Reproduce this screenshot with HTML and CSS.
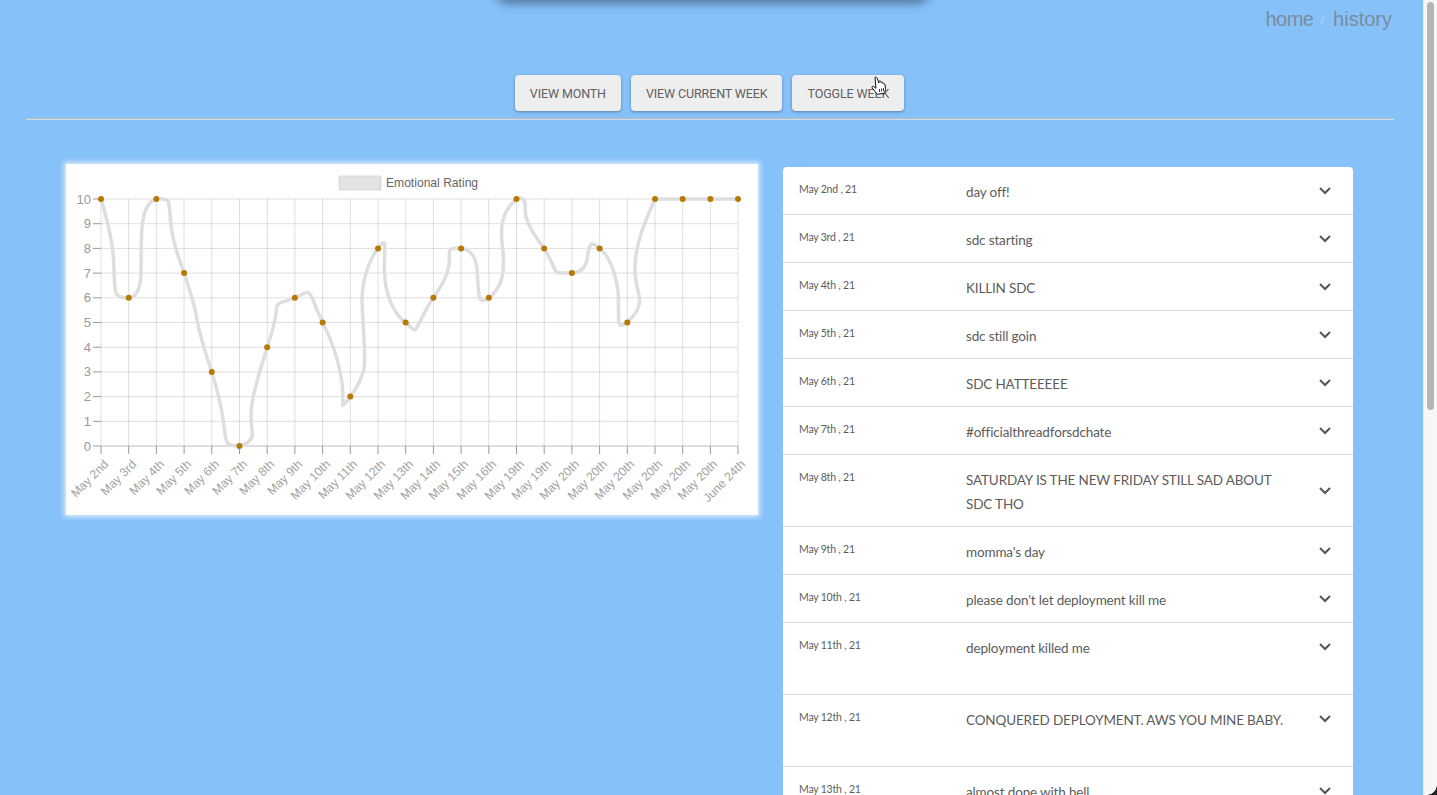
FILE: index.html
```html
<!DOCTYPE HTML>
<html>
<head>
    <title>history</title>
    <link rel="stylesheet" href="styles.css">
</head>

<body>
    <div class="window">
        <div class="page">
            <div class="top-drawer"></div>

            <nav class="crumbs">
                <span class="crumb crumb-home">home</span>
                <span class="crumb-sep">/</span>
                <span class="crumb">history</span>
            </nav>

            <div class="toolbar">
                <button class="btn">VIEW MONTH</button>
                <button class="btn">VIEW CURRENT WEEK</button>
                <button class="btn">TOGGLE WEEK</button>
            </div>
            <div class="rule"></div>

            <div class="columns">
                <div class="chart-card">
                    <svg class="chart" width="692" height="351" viewBox="66 164 692 351">
                        <rect class="legend-box" x="339.5" y="176.5" width="41" height="13"></rect>
                        <text class="legend-text" x="386" y="187">Emotional Rating</text>

                        <!-- grid -->
                        <path class="grid" d="M101 199V446M128.7 199V446M156.4 199V446M184.1 199V446M211.8 199V446M239.5 199V446M267.2 199V446M294.9 199V446M322.6 199V446M350.3 199V446M378 199V446M405.7 199V446M433.4 199V446M461.1 199V446M488.8 199V446M516.5 199V446M544.2 199V446M571.9 199V446M599.6 199V446M627.3 199V446M655 199V446M682.7 199V446M710.4 199V446M738 199V446"></path>
                        <path class="grid" d="M101 199H738M101 223.7H738M101 248.4H738M101 273.1H738M101 297.8H738M101 322.5H738M101 347.2H738M101 371.9H738M101 396.6H738M101 421.3H738"></path>
                        <path class="zero" d="M101 446H738"></path>
                        <path class="ticks" d="M93 199H101M93 223.7H101M93 248.4H101M93 273.1H101M93 297.8H101M93 322.5H101M93 347.2H101M93 371.9H101M93 396.6H101M93 421.3H101M93 446H101M101 446V454M128.7 446V454M156.4 446V454M184.1 446V454M211.8 446V454M239.5 446V454M267.2 446V454M294.9 446V454M322.6 446V454M350.3 446V454M378 446V454M405.7 446V454M433.4 446V454M461.1 446V454M488.8 446V454M516.5 446V454M544.2 446V454M571.9 446V454M599.6 446V454M627.3 446V454M655 446V454M682.7 446V454M710.4 446V454M738 446V454"></path>

                        <!-- y labels -->
                        <text class="y-label" x="91" y="203.5">10</text>
                        <text class="y-label" x="91" y="228">9</text>
                        <text class="y-label" x="91" y="253">8</text>
                        <text class="y-label" x="91" y="277.5">7</text>
                        <text class="y-label" x="91" y="302">6</text>
                        <text class="y-label" x="91" y="327">5</text>
                        <text class="y-label" x="91" y="351.5">4</text>
                        <text class="y-label" x="91" y="376">3</text>
                        <text class="y-label" x="91" y="401">2</text>
                        <text class="y-label" x="91" y="425.5">1</text>
                        <text class="y-label" x="91" y="450.5">0</text>

                        <!-- x labels -->
                        <text class="x-label" transform="translate(109 465) rotate(-45)">May 2nd</text>
                        <text class="x-label" transform="translate(137 465) rotate(-45)">May 3rd</text>
                        <text class="x-label" transform="translate(165 465) rotate(-45)">May 4th</text>
                        <text class="x-label" transform="translate(192 465) rotate(-45)">May 5th</text>
                        <text class="x-label" transform="translate(220 465) rotate(-45)">May 6th</text>
                        <text class="x-label" transform="translate(248 465) rotate(-45)">May 7th</text>
                        <text class="x-label" transform="translate(275 465) rotate(-45)">May 8th</text>
                        <text class="x-label" transform="translate(303 465) rotate(-45)">May 9th</text>
                        <text class="x-label" transform="translate(331 465) rotate(-45)">May 10th</text>
                        <text class="x-label" transform="translate(358 465) rotate(-45)">May 11th</text>
                        <text class="x-label" transform="translate(386 465) rotate(-45)">May 12th</text>
                        <text class="x-label" transform="translate(414 465) rotate(-45)">May 13th</text>
                        <text class="x-label" transform="translate(441 465) rotate(-45)">May 14th</text>
                        <text class="x-label" transform="translate(469 465) rotate(-45)">May 15th</text>
                        <text class="x-label" transform="translate(497 465) rotate(-45)">May 16th</text>
                        <text class="x-label" transform="translate(525 465) rotate(-45)">May 19th</text>
                        <text class="x-label" transform="translate(552 465) rotate(-45)">May 19th</text>
                        <text class="x-label" transform="translate(580 465) rotate(-45)">May 20th</text>
                        <text class="x-label" transform="translate(608 465) rotate(-45)">May 20th</text>
                        <text class="x-label" transform="translate(635 465) rotate(-45)">May 20th</text>
                        <text class="x-label" transform="translate(663 465) rotate(-45)">May 20th</text>
                        <text class="x-label" transform="translate(691 465) rotate(-45)">May 20th</text>
                        <text class="x-label" transform="translate(718 465) rotate(-45)">May 20th</text>
                        <text class="x-label" transform="translate(746 465) rotate(-45)">June 24th</text>

                        <!-- rating line -->
                        <path class="line" d="M101 199C106 216 112 235 113.5 258C114.5 275 114 288 116 293C118 297.5 124 298 128.7 298C134 298 139 292 140.5 280C142 265 140 235 143 220C145 208 150 201 156.4 199C161 198.5 166 199 168 201C170 204 170 222 172 232C174 245 180 262 184.1 273C189 288 195 305 197 320C200 335 207 358 211.8 372C216 385 221 405 223.5 422C225 432 225 441 228 443.5C231 445.5 236 446 239.5 446C243 445 250 442 252 437C253 431 250 420 251.5 408C253 390 262 365 267.2 347C272 333 276 320 276.5 308C276.5 305 278 304 280 303C285 301 290 300 294.9 298C299 296 305 292 308 292.5C311 293 313 300 315 305C317 311 320 316 322.6 322.5C328 333 338 355 342 382C343 390 343 402 343 405C345 404 347 401 350.3 396.6C356 389 362 380 364 368C366 355 363 330 362 300C362 280 370 258 378 248.4C380 246 383 241 384.5 243C386 247 383 265 385 280C387 298 395 315 405.7 322.5C409 325 413 331 415.5 329.5C418 327 425 309 433.4 298C440 288 447 278 449 265C450 258 448 250 451 249C454 248 457 248 461.1 248.4C470 249 475 255 477 268C478 280 478 295 480 299C482 301 485 301 488.8 298C497 291 503 283 503.5 265C504 250 500 240 502 225C504 213 510 204 516.5 199C519 198 523 198 524 200C526 203 524 212 527 220C530 229 537 239 544.2 248.4C548 255 553 265 555 270C556 273 558 273 560 273C564 273 568 273 571.9 273C580 273 585 268 587 260C588 252 589 245 592 244C594 244 597 246 599.6 248.4C610 256 616 275 618 292C619 302 618 318 619 323C620 327 623 325 627.3 322.5C633 316 639 311 639.5 302C640 292 634 283 635 265C636 240 648 215 655 199L738 199"></path>

                        <!-- points -->
                        <circle class="dot" cx="101" cy="199" r="3"></circle>
                        <circle class="dot" cx="128.7" cy="297.8" r="3"></circle>
                        <circle class="dot" cx="156.4" cy="199" r="3"></circle>
                        <circle class="dot" cx="184.1" cy="273.1" r="3"></circle>
                        <circle class="dot" cx="211.8" cy="371.9" r="3"></circle>
                        <circle class="dot" cx="239.5" cy="446" r="3"></circle>
                        <circle class="dot" cx="267.2" cy="347.2" r="3"></circle>
                        <circle class="dot" cx="294.9" cy="297.8" r="3"></circle>
                        <circle class="dot" cx="322.6" cy="322.5" r="3"></circle>
                        <circle class="dot" cx="350.3" cy="396.6" r="3"></circle>
                        <circle class="dot" cx="378" cy="248.4" r="3"></circle>
                        <circle class="dot" cx="405.7" cy="322.5" r="3"></circle>
                        <circle class="dot" cx="433.4" cy="297.8" r="3"></circle>
                        <circle class="dot" cx="461.1" cy="248.4" r="3"></circle>
                        <circle class="dot" cx="488.8" cy="297.8" r="3"></circle>
                        <circle class="dot" cx="516.5" cy="199" r="3"></circle>
                        <circle class="dot" cx="544.2" cy="248.4" r="3"></circle>
                        <circle class="dot" cx="571.9" cy="273.1" r="3"></circle>
                        <circle class="dot" cx="599.6" cy="248.4" r="3"></circle>
                        <circle class="dot" cx="627.3" cy="322.5" r="3"></circle>
                        <circle class="dot" cx="655" cy="199" r="3"></circle>
                        <circle class="dot" cx="682.7" cy="199" r="3"></circle>
                        <circle class="dot" cx="710.4" cy="199" r="3"></circle>
                        <circle class="dot" cx="738" cy="199" r="3"></circle>
                    </svg>
                </div>

                <div class="entries">
                    <div class="entry">
                        <div class="entry-date">May 2nd , 21</div>
                        <div class="entry-title">day off!</div>
                        <svg class="chevron" width="12" height="8" viewBox="0 0 12 8"><path d="M1 1l5 5 5-5"></path></svg>
                    </div>
                    <div class="entry">
                        <div class="entry-date">May 3rd , 21</div>
                        <div class="entry-title">sdc starting</div>
                        <svg class="chevron" width="12" height="8" viewBox="0 0 12 8"><path d="M1 1l5 5 5-5"></path></svg>
                    </div>
                    <div class="entry">
                        <div class="entry-date">May 4th , 21</div>
                        <div class="entry-title">KILLIN SDC</div>
                        <svg class="chevron" width="12" height="8" viewBox="0 0 12 8"><path d="M1 1l5 5 5-5"></path></svg>
                    </div>
                    <div class="entry">
                        <div class="entry-date">May 5th , 21</div>
                        <div class="entry-title">sdc still goin</div>
                        <svg class="chevron" width="12" height="8" viewBox="0 0 12 8"><path d="M1 1l5 5 5-5"></path></svg>
                    </div>
                    <div class="entry">
                        <div class="entry-date">May 6th , 21</div>
                        <div class="entry-title">SDC HATTEEEEE</div>
                        <svg class="chevron" width="12" height="8" viewBox="0 0 12 8"><path d="M1 1l5 5 5-5"></path></svg>
                    </div>
                    <div class="entry">
                        <div class="entry-date">May 7th , 21</div>
                        <div class="entry-title">#officialthreadforsdchate</div>
                        <svg class="chevron" width="12" height="8" viewBox="0 0 12 8"><path d="M1 1l5 5 5-5"></path></svg>
                    </div>
                    <div class="entry entry-wrap">
                        <div class="entry-date">May 8th , 21</div>
                        <div class="entry-title">SATURDAY IS THE NEW FRIDAY STILL SAD ABOUT SDC THO</div>
                        <svg class="chevron" width="12" height="8" viewBox="0 0 12 8"><path d="M1 1l5 5 5-5"></path></svg>
                    </div>
                    <div class="entry">
                        <div class="entry-date">May 9th , 21</div>
                        <div class="entry-title">momma's day</div>
                        <svg class="chevron" width="12" height="8" viewBox="0 0 12 8"><path d="M1 1l5 5 5-5"></path></svg>
                    </div>
                    <div class="entry">
                        <div class="entry-date">May 10th , 21</div>
                        <div class="entry-title">please don't let deployment kill me</div>
                        <svg class="chevron" width="12" height="8" viewBox="0 0 12 8"><path d="M1 1l5 5 5-5"></path></svg>
                    </div>
                    <div class="entry entry-tall">
                        <div class="entry-date">May 11th , 21</div>
                        <div class="entry-title">deployment killed me</div>
                        <svg class="chevron" width="12" height="8" viewBox="0 0 12 8"><path d="M1 1l5 5 5-5"></path></svg>
                    </div>
                    <div class="entry entry-tall">
                        <div class="entry-date">May 12th , 21</div>
                        <div class="entry-title">CONQUERED DEPLOYMENT. AWS YOU MINE BABY.</div>
                        <svg class="chevron" width="12" height="8" viewBox="0 0 12 8"><path d="M1 1l5 5 5-5"></path></svg>
                    </div>
                    <div class="entry">
                        <div class="entry-date">May 13th , 21</div>
                        <div class="entry-title">almost done with hell</div>
                        <svg class="chevron" width="12" height="8" viewBox="0 0 12 8"><path d="M1 1l5 5 5-5"></path></svg>
                    </div>
                </div>
            </div>

            <svg class="cursor" width="18" height="20" viewBox="0 0 18 20">
                <path d="M4 1.500c1-.8 2 0 2.300 1l1.500 4.500.3-1.600c.5-.8 1.500-.6 1.800.2l.3 1.200c.4-.8 1.500-.7 1.800.1l.2 1c.5-.6 1.500-.4 1.700.4l.6 4c.2 2-.5 3.500-1.800 5l-6.500 1c-1.500-2-3.500-4.500-5-6.500-.6-1 .5-2 1.500-1.300l2.300 1.800z"></path>
                <path class="cursor-lines" d="M8.500 13v3M10.500 12.500v3M12.500 12v3"></path>
            </svg>
        </div>

        <div class="scrollbar">
            <div class="scroll-thumb"></div>
        </div>
    </div>
</body>

</html>
```

FILE: styles.css
```css
html, body {
    margin: 0;
    height: 100%;
    overflow: hidden;
}

body {
    font-family: "Liberation Sans", Arial, sans-serif;
    background: #86c1f9;
}

.window {
    display: flex;
    height: 795px;
    overflow: hidden;
}

.page {
    position: relative;
    flex: 1;
    min-width: 0;
    height: 795px;
    overflow: hidden;
    background: #86c1f9;
}

.top-drawer {
    position: absolute;
    left: 496px;
    top: -30px;
    width: 433px;
    height: 30px;
    border-radius: 14px;
    background: #5f8db8;
    box-shadow: 0 1px 10px 3px rgba(40, 60, 90, 0.55);
}

.crumbs {
    display: flex;
    justify-content: flex-end;
    align-items: center;
    gap: 9px;
    height: 38px;
    padding-right: 31px;
    font-size: 20px;
    font-weight: 300;
    color: #7a8ca0;
}

.crumb-home {
    margin-right: -2px;
    letter-spacing: -0.5px;
}

.crumb-sep {
    font-size: 13px;
    color: #b9d9f7;
}

.toolbar {
    display: flex;
    justify-content: center;
    gap: 10px;
    margin-top: 37px;
    padding-right: 4px;
}

.btn {
    height: 36px;
    padding: 0 15px;
    border: none;
    border-radius: 4px;
    background: #eeeeee;
    box-shadow: 0 1px 3px rgba(0, 0, 0, 0.35);
    font-family: Roboto, "Liberation Sans", sans-serif;
    font-size: 12.500px;
    letter-spacing: -0.12px;
    color: #606060;
}

.rule {
    height: 1px;
    margin: 7px 29px 0 26px;
    background: #bdbdb4;
    box-shadow: 0 1px 0 #c5def5;
}

.columns {
    display: flex;
    align-items: flex-start;
    margin-top: 45px;
    padding-left: 66px;
}

.chart-card {
    width: 692px;
    height: 351px;
    background: #ffffff;
    box-shadow: 0 0 5px 2px rgba(255, 255, 255, 0.7);
}

.chart {
    display: block;
}

.legend-box {
    fill: #e4e4e4;
    stroke: #dddddd;
    stroke-width: 2;
}

.legend-text {
    font-size: 12.100px;
    fill: #666666;
}

.grid {
    fill: none;
    stroke: rgba(0, 0, 0, 0.13);
    stroke-width: 1;
}

.zero {
    fill: none;
    stroke: rgba(0, 0, 0, 0.25);
    stroke-width: 1;
}

.ticks {
    fill: none;
    stroke: #999999;
    stroke-width: 1;
}

.y-label {
    font-size: 13px;
    fill: #999999;
    text-anchor: end;
}

.x-label {
    font-size: 12.200px;
    fill: #a3a3a3;
    text-anchor: end;
}

.line {
    fill: none;
    stroke: #dedede;
    stroke-width: 3.500;
}

.dot {
    fill: #b47a05;
}

.entries {
    width: 570px;
    margin: 3px 0 0 25px;
    flex-shrink: 0;
    border-radius: 4px 4px 0 0;
    background: #ffffff;
}

.entry {
    display: flex;
    align-items: flex-start;
    box-sizing: border-box;
    height: 48px;
    padding-left: 16px;
    border-bottom: 1px solid #d8d8d8;
    color: #5c5c5c;
}

.entry-wrap,
.entry-tall {
    height: 72px;
}

.entry-date {
    width: 167px;
    flex-shrink: 0;
    margin-top: 15px;
    font-family: Lato, sans-serif;
    font-size: 10.500px;
    letter-spacing: -0.2px;
    line-height: 14px;
}

.entry-title {
    width: 330px;
    flex-shrink: 0;
    margin-top: 13px;
    font-family: Lato, sans-serif;
    font-size: 13.500px;
    letter-spacing: -0.15px;
    line-height: 24px;
}

.chevron {
    margin: 20px 0 0 23px;
}

.entry-wrap .chevron {
    margin-top: 32px;
}

.chevron path {
    fill: none;
    stroke: #555555;
    stroke-width: 2;
}

.cursor {
    position: absolute;
    left: 871px;
    top: 76px;
}

.cursor path {
    fill: #ffffff;
    stroke: #111111;
    stroke-width: 1;
    stroke-linejoin: round;
}

.cursor .cursor-lines {
    fill: none;
    stroke: #333333;
}

.scrollbar {
    position: relative;
    width: 14px;
    flex-shrink: 0;
    height: 795px;
    box-sizing: border-box;
    padding: 2px 3px 0 3px;
    background: #f7f7f7;
    border-left: 1px solid #e9e9e9;
}

.scrollbar::after {
    content: "";
    position: absolute;
    right: 0;
    bottom: 0;
    width: 10px;
    height: 10px;
    background: radial-gradient(circle at 0 0, transparent 9.500px, #222222 10px);
}

.scroll-thumb {
    height: 408px;
    border-radius: 4px;
    background: #b6b6b6;
}
```
